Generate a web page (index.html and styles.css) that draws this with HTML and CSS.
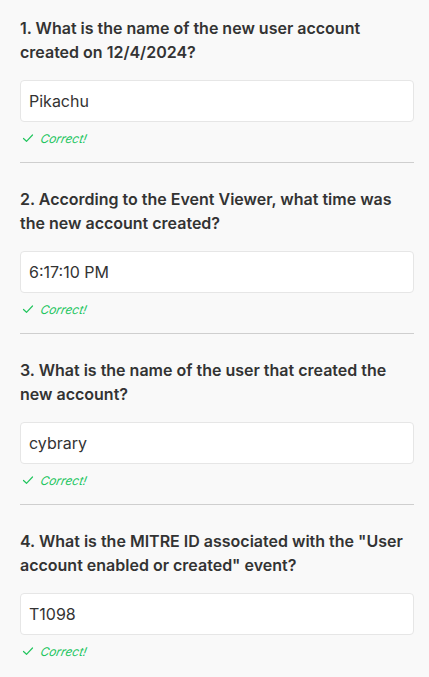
FILE: index.html
```html
<!DOCTYPE html>
<html lang="en">
<head>
<meta charset="utf-8">
<link rel="stylesheet" href="styles.css">
</head>
<body>
<main class="quiz">
  <section class="q">
    <h2 class="q-title">1. What is the name of the new user account created on 12/4/2024?</h2>
    <div class="answer">Pikachu</div>
    <p class="status"><svg class="check" viewBox="0 0 12 12" width="12" height="12"><path d="M1.5 6.5 L4.5 9.3 L10.5 3" fill="none" stroke="currentColor" stroke-width="1.2" stroke-linecap="round" stroke-linejoin="round"/></svg><span class="status-text">Correct!</span></p>
  </section>
  <section class="q">
    <h2 class="q-title">2. According to the Event Viewer, what time was the new account created?</h2>
    <div class="answer">6:17:10 PM</div>
    <p class="status"><svg class="check" viewBox="0 0 12 12" width="12" height="12"><path d="M1.5 6.5 L4.5 9.3 L10.5 3" fill="none" stroke="currentColor" stroke-width="1.2" stroke-linecap="round" stroke-linejoin="round"/></svg><span class="status-text">Correct!</span></p>
  </section>
  <section class="q">
    <h2 class="q-title">3. What is the name of the user that created the new account?</h2>
    <div class="answer">cybrary</div>
    <p class="status"><svg class="check" viewBox="0 0 12 12" width="12" height="12"><path d="M1.5 6.5 L4.5 9.3 L10.5 3" fill="none" stroke="currentColor" stroke-width="1.2" stroke-linecap="round" stroke-linejoin="round"/></svg><span class="status-text">Correct!</span></p>
  </section>
  <section class="q">
    <h2 class="q-title">4. What is the MITRE ID associated with the "User account enabled or created" event?</h2>
    <div class="answer">T1098</div>
    <p class="status"><svg class="check" viewBox="0 0 12 12" width="12" height="12"><path d="M1.5 6.5 L4.5 9.3 L10.5 3" fill="none" stroke="currentColor" stroke-width="1.2" stroke-linecap="round" stroke-linejoin="round"/></svg><span class="status-text">Correct!</span></p>
  </section>
</main>
</body>
</html>
```

FILE: styles.css
```css
* { box-sizing: border-box; }
html, body { margin: 0; padding: 0; background: #f9f9f9; }
body { font-family: Inter, "Noto Sans", sans-serif; color: #333; }
.quiz { padding: 16px 15px 0 20px; display: flex; flex-direction: column; gap: 24px; }
.q { display: flex; flex-direction: column; padding-bottom: 16px; border-bottom: 1px solid #cfcfcf; }
.q:last-child { border-bottom: none; }
.q-title { margin: 0; font-size: 16px; line-height: 24px; font-weight: 600; color: #333; }
.answer { margin-top: 16px; height: 42px; background: #fff; border: 1px solid #e6e6e6; border-radius: 4px; padding: 0 8px; display: flex; align-items: center; font-size: 16px; color: #333; }
.status { margin: 8px 0 0; display: flex; align-items: center; gap: 5px; height: 16px; font-size: 12px; color: #22c55e; padding-left: 2px; }
.status-text { display: inline-block; font-style: italic; transform: skewX(-12deg); transform-origin: 0 100%; }
.check { color: #22c55e; }
```
